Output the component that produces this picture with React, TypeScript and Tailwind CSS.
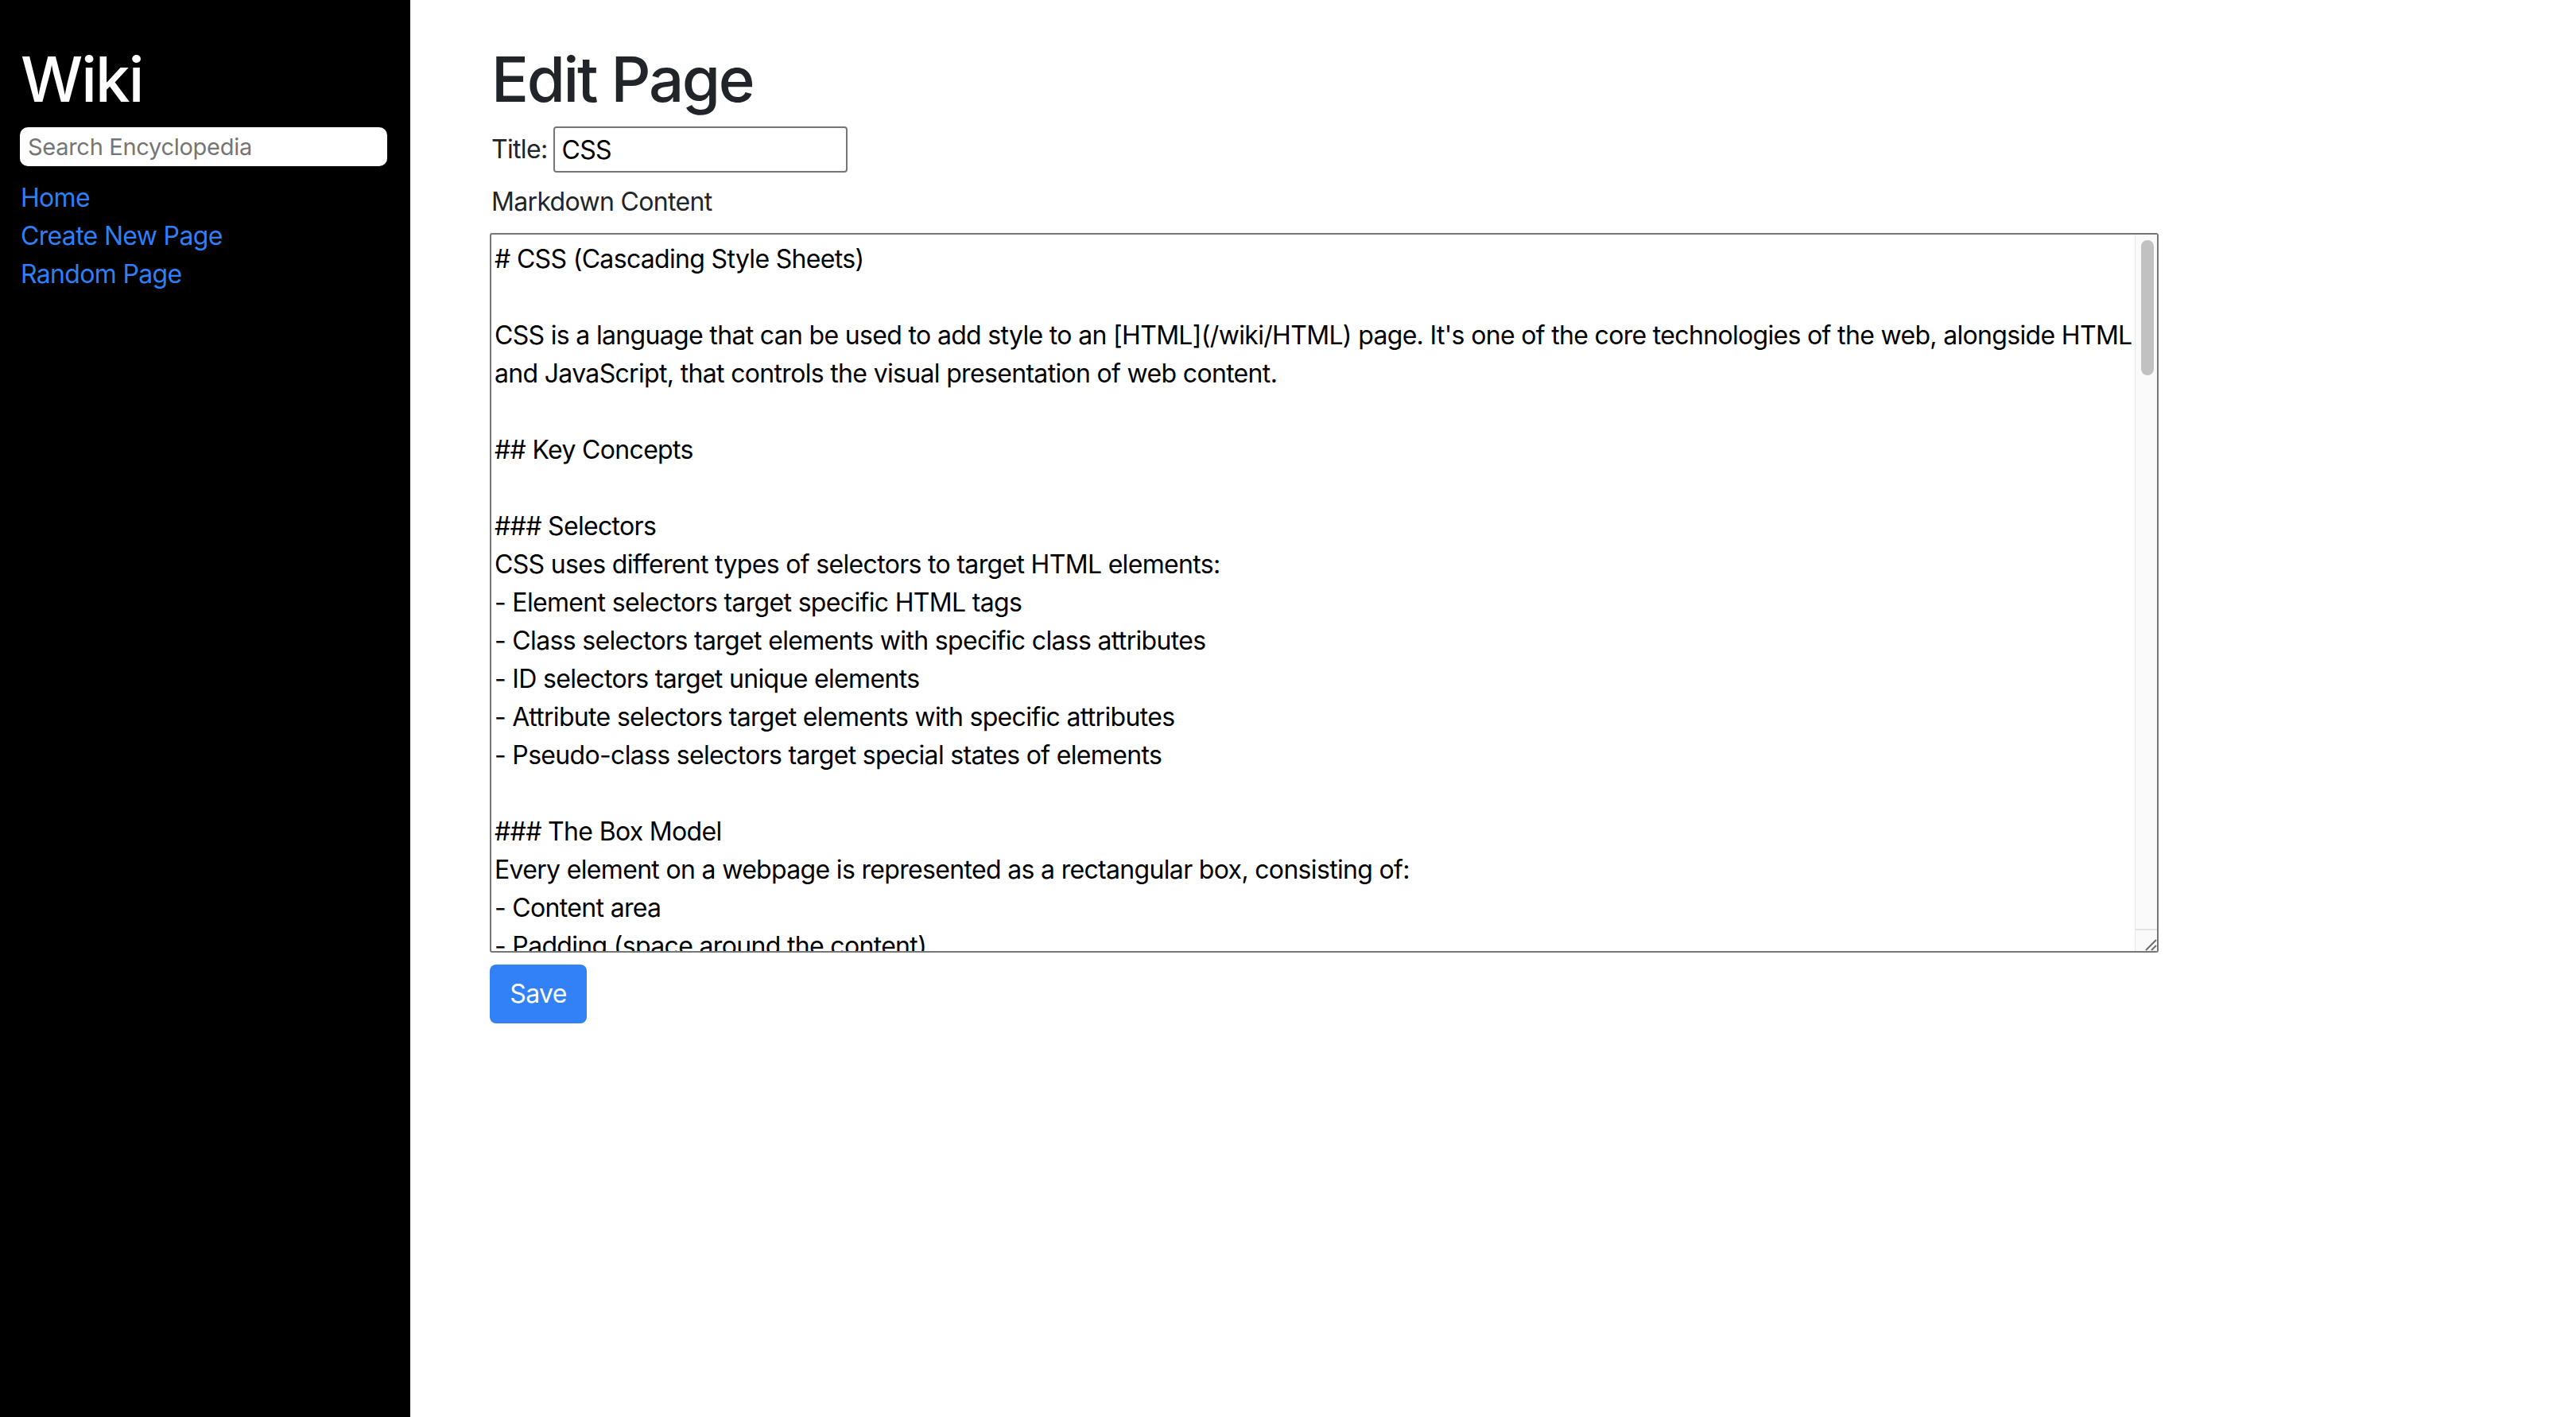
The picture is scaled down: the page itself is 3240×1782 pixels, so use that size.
import React, { useState } from 'react';

const initialContent = `# CSS (Cascading Style Sheets)

CSS is a language that can be used to add style to an [HTML](/wiki/HTML) page. It's one of the core technologies of the web, alongside HTML and JavaScript, that controls the visual presentation of web content.

## Key Concepts

### Selectors
CSS uses different types of selectors to target HTML elements:
- Element selectors target specific HTML tags
- Class selectors target elements with specific class attributes
- ID selectors target unique elements
- Attribute selectors target elements with specific attributes
- Pseudo-class selectors target special states of elements

### The Box Model
Every element on a webpage is represented as a rectangular box, consisting of:
- Content area
- Padding (space around the content)
- Border (a line around the padding)
- Margin (space outside the border)

### Layout
CSS provides several ways to lay out elements on a page:
- Normal flow
- Flexbox, for one-dimensional layouts
- Grid, for two-dimensional layouts
- Positioning (relative, absolute, fixed and sticky)
- Floats

### Cascade and Specificity
When more than one rule applies to the same element, the browser decides which one wins by looking at:
- Importance
- Specificity of the selector
- Order in which the rules appear

### Responsive Design
Media queries let a page adapt its styles to different screen sizes and devices:
- Breakpoints for phones, tablets and desktops
- Relative units such as em, rem and percentages
- Fluid images and flexible grids

## Syntax

A CSS rule is made of a selector and a declaration block:

\`\`\`css
h1 {
    color: blue;
    font-size: 24px;
}
\`\`\`

Each declaration includes a property name and a value, separated by a colon.

## Ways to Add CSS

- Inline styles, using the style attribute
- Internal styles, inside a <style> element
- External stylesheets, linked with a <link> element

## Preprocessors

Tools such as Sass and Less extend CSS with variables, nesting and mixins, and compile down to regular CSS.

## Frameworks

Popular CSS frameworks include:
- Bootstrap
- Tailwind CSS
- Bulma
- Foundation

## History

CSS was first proposed by Håkon Wium Lie in 1994. CSS level 1 became a W3C recommendation in 1996, followed by CSS2 in 1998. CSS3 split the language into separate modules that are developed independently.

## See Also

- [HTML](/wiki/HTML)
- [JavaScript](/wiki/JavaScript)
- [Django](/wiki/Django)
- [Python](/wiki/Python)
- [Git](/wiki/Git)
`;

const font = "font-['Inter','Liberation_Sans',sans-serif]";
// body text: 32px with a little negative tracking (em is resolved per element)
const body = 'text-[32px] leading-[48px] tracking-[-0.021em]';

// the textarea's scrollbar, drawn over its right edge
function FakeScrollbar() {
  return (
    <div className="pointer-events-none absolute top-[2px] bottom-[2px] right-[2px] w-[28px] flex flex-col bg-[#fafafa] border-l border-[#e8e8e8]">
      <div className="flex-1 pt-[7px] pl-[7px]">
        <div className="w-[16px] h-[170px] rounded-full bg-[#c1c1c1]" />
      </div>
      <div className="h-[28px] border-t-2 border-[#e2e2e2] flex items-end justify-end">
        <svg width="26" height="26" viewBox="0 0 26 26">
          <line x1="12" y1="25" x2="25" y2="12" stroke="#6b6b6b" strokeWidth="2" />
          <line x1="19" y1="25" x2="25" y2="19" stroke="#6b6b6b" strokeWidth="2" />
        </svg>
      </div>
    </div>
  );
}

export default function App() {
  const [title, setTitle] = useState('CSS');
  const [content, setContent] = useState(initialContent);

  return (
    <div className={`flex min-h-screen bg-white ${font}`}>
      {/* sidebar */}
      <div className="w-[516px] shrink-0 bg-black px-[25px] pt-[52px]">
        <h1 className="text-[78px] leading-[96px] font-medium tracking-[-0.025em] text-white pl-[1px] mb-[12px]">Wiki</h1>
        <input
          type="text"
          placeholder="Search Encyclopedia"
          className="block w-[462px] h-[49px] rounded-[10px] bg-white px-[10px] text-[29px] tracking-[-0.01em] text-black placeholder:text-[#757575] outline-none"
        />
        <div className={`mt-[16px] pl-[1px] flex flex-col text-[#2f7ff7] ${body}`}>
          <a href="#">Home</a>
          <a href="#">Create New Page</a>
          <a href="#">Random Page</a>
        </div>
      </div>

      {/* main */}
      <div className="flex-1 pl-[100px] pt-[52px] text-[#212529]">
        <h1 className="text-[78px] leading-[96px] font-medium tracking-[-0.03em] pl-[2px] mb-[11px]">Edit Page</h1>
        <form className="flex flex-col items-start">
          <div className="flex items-center gap-[8px] pl-[2px]">
            <label className={body}>Title:</label>
            <input
              type="text"
              value={title}
              onChange={(e) => setTitle(e.target.value)}
              className={`w-[370px] h-[58px] border-2 border-[#767676] rounded-[4px] px-[8px] text-black outline-none ${body}`}
            />
          </div>
          <div className={`mt-[13px] pl-[2px] ${body}`}>Markdown Content</div>
          <div className="relative mt-[15px]">
            <textarea
              value={content}
              onChange={(e) => setContent(e.target.value)}
              className={`block w-[2099px] h-[905px] resize-none border-2 border-[#767676] rounded-[3px] pt-[7px] pl-[4px] pr-[30px] text-black outline-none [scrollbar-width:none] ${body}`}
            />
            <FakeScrollbar />
          </div>
          <button
            type="button"
            className={`mt-[15px] h-[74px] w-[122px] rounded-[8px] bg-[#3281f7] text-white ${body}`}
          >
            Save
          </button>
        </form>
      </div>
    </div>
  );
}
